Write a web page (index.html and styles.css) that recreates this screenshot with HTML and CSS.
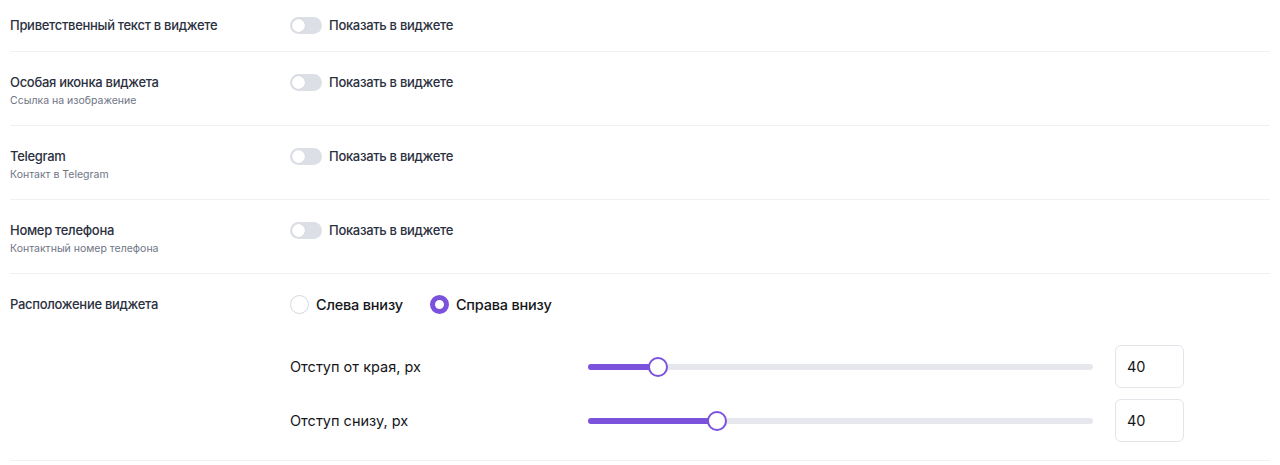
FILE: index.html
```html
<!DOCTYPE html>
<html lang="ru">
<head>
<meta charset="utf-8">
<link rel="stylesheet" href="styles.css">
</head>
<body>
<div class="settings">
  <div class="row row-first">
    <div class="label-col">
      <div class="label">Приветственный текст в виджете</div>
    </div>
    <div class="control-col">
      <label class="toggle-line"><span class="toggle"><span class="knob"></span></span><span class="toggle-text">Показать в виджете</span></label>
    </div>
  </div>
  <div class="row">
    <div class="label-col">
      <div class="label">Особая иконка виджета</div>
      <div class="sub">Ссылка на изображение</div>
    </div>
    <div class="control-col">
      <label class="toggle-line"><span class="toggle"><span class="knob"></span></span><span class="toggle-text">Показать в виджете</span></label>
    </div>
  </div>
  <div class="row">
    <div class="label-col">
      <div class="label">Telegram</div>
      <div class="sub">Контакт в Telegram</div>
    </div>
    <div class="control-col">
      <label class="toggle-line"><span class="toggle"><span class="knob"></span></span><span class="toggle-text">Показать в виджете</span></label>
    </div>
  </div>
  <div class="row">
    <div class="label-col">
      <div class="label">Номер телефона</div>
      <div class="sub">Контактный номер телефона</div>
    </div>
    <div class="control-col">
      <label class="toggle-line"><span class="toggle"><span class="knob"></span></span><span class="toggle-text">Показать в виджете</span></label>
    </div>
  </div>
  <div class="row row-last">
    <div class="label-col">
      <div class="label">Расположение виджета</div>
    </div>
    <div class="control-col">
      <div class="radios">
        <label class="radio"><span class="radio-dot"></span><span class="radio-text">Слева внизу</span></label>
        <label class="radio checked"><span class="radio-dot"></span><span class="radio-text">Справа внизу</span></label>
      </div>
      <div class="sliders">
        <div class="slider-row">
          <div class="slider-label">Отступ от края, px</div>
          <div class="track"><div class="fill" style="width:13.9%"><span class="thumb"></span></div></div>
          <div class="num">40</div>
        </div>
        <div class="slider-row">
          <div class="slider-label">Отступ снизу, px</div>
          <div class="track"><div class="fill" style="width:25.6%"><span class="thumb"></span></div></div>
          <div class="num">40</div>
        </div>
      </div>
    </div>
  </div>
</div>
</body>
</html>
```

FILE: styles.css
```css
* { box-sizing: border-box; }
html, body { margin: 0; padding: 0; background: #ffffff; }
body {
  font-family: Inter, "Noto Sans", "Liberation Sans", sans-serif;
  color: #2b3040;
  overflow: hidden;
}
.settings {
  margin: -5px 10px 0 10px;
}
.row {
  display: flex;
  align-items: flex-start;
  padding: 21px 0 16px 0;
  border-bottom: 1px solid #eef0f3;
}
.row-first { padding-bottom: 17px; }
.row-last { padding-bottom: 18px; }
.label-col { width: 280px; flex: none; }
.label {
  font-size: 13px;
  font-weight: 500;
  line-height: 18px;
  letter-spacing: -0.3px;
  color: #2b3040;
}
.sub {
  margin-top: 2px;
  font-size: 10.5px;
  line-height: 16px;
  color: #6f7585;
}
.control-col { flex: 1; }
.toggle-line {
  display: flex;
  align-items: center;
  height: 18px;
  gap: 7px;
}
.toggle {
  width: 32px;
  height: 17px;
  border-radius: 9px;
  background: #dcdfe5;
  display: flex;
  align-items: center;
  padding: 0 2px;
}
.knob {
  width: 13px;
  height: 13px;
  border-radius: 50%;
  background: #ffffff;
  box-shadow: 0 0 1px rgba(0,0,0,0.15);
}
.toggle-text {
  font-size: 13px;
  font-weight: 500;
  letter-spacing: -0.3px;
  color: #2b3040;
}
.radios {
  display: flex;
  align-items: center;
  gap: 27px;
  height: 20px;
  margin-top: -1px;
}
.radio {
  display: flex;
  align-items: center;
  gap: 7px;
}
.radio-dot {
  width: 19px;
  height: 19px;
  border-radius: 50%;
  border: 1.5px solid #d6d8de;
  background: #fff;
}
.radio.checked .radio-dot {
  border: 5px solid #7b52dc;
}
.radio-text {
  font-size: 14.5px;
  font-weight: 500;
  letter-spacing: -0.2px;
  color: #15161a;
}
.sliders {
  margin-top: 31px;
  display: flex;
  flex-direction: column;
  gap: 11px;
}
.slider-row {
  display: flex;
  align-items: center;
  height: 43px;
}
.slider-label {
  width: 298px;
  flex: none;
  font-size: 14.5px;
  color: #15161a;
}
.track {
  width: 505px;
  flex: none;
  height: 6px;
  border-radius: 3px;
  background: #e6e7ec;
  display: flex;
}
.fill {
  height: 6px;
  border-radius: 3px;
  background: #7b52dc;
  position: relative;
}
.thumb {
  position: absolute;
  right: -10px;
  top: -7px;
  width: 20px;
  height: 20px;
  border-radius: 50%;
  background: #fff;
  border: 2px solid #7b52dc;
}
.num {
  margin-left: 22px;
  width: 69px;
  height: 43px;
  border: 1px solid #e3e5ea;
  border-radius: 6px;
  display: flex;
  align-items: center;
  padding-left: 11px;
  font-size: 14.5px;
  color: #15161a;
}
```
